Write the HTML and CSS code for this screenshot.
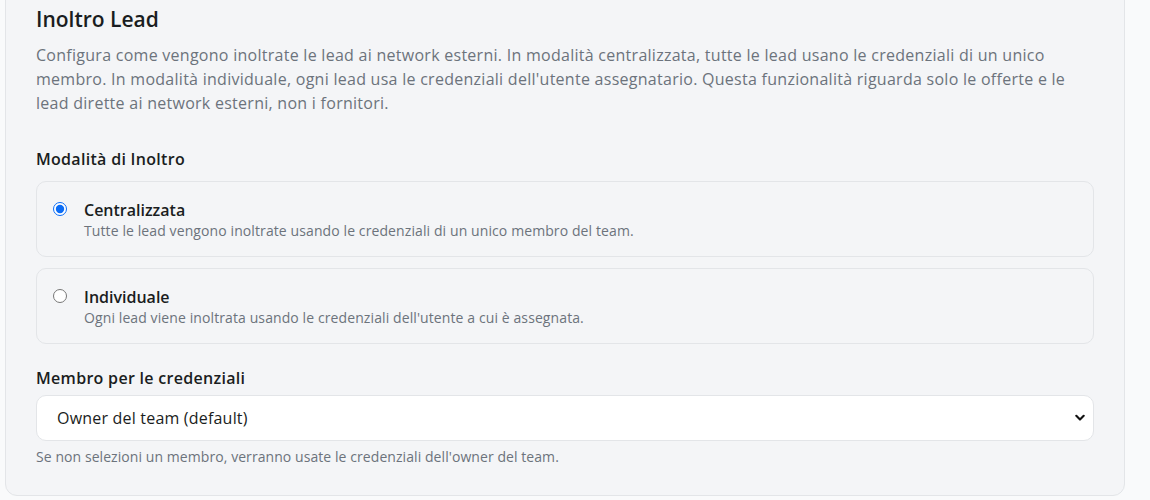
FILE: index.html
```html
<!DOCTYPE html>
<html lang="it">
<head>
<meta charset="utf-8">
<title>Inoltro Lead</title>
<link rel="stylesheet" href="styles.css">
</head>
<body>
<div class="page">
  <section class="card">
    <h2 class="card-title">Inoltro Lead</h2>
    <p class="card-desc">Configura come vengono inoltrate le lead ai network esterni. In modalità centralizzata, tutte le lead usano le credenziali di un unico membro. In modalità individuale, ogni lead usa le credenziali dell'utente assegnatario. Questa funzionalità riguarda solo le offerte e le lead dirette ai network esterni, non i fornitori.</p>

    <div class="field">
      <div class="field-label">Modalità di Inoltro</div>
      <div class="options">
        <label class="option">
          <input type="radio" name="mode" class="option-radio" checked>
          <span class="option-body">
            <span class="option-title">Centralizzata</span>
            <span class="option-desc">Tutte le lead vengono inoltrate usando le credenziali di un unico membro del team.</span>
          </span>
        </label>
        <label class="option">
          <input type="radio" name="mode" class="option-radio">
          <span class="option-body">
            <span class="option-title">Individuale</span>
            <span class="option-desc">Ogni lead viene inoltrata usando le credenziali dell'utente a cui è assegnata.</span>
          </span>
        </label>
      </div>
    </div>

    <div class="field field-member">
      <div class="field-label">Membro per le credenziali</div>
      <div class="select">
        <span class="select-value">Owner del team (default)</span>
        <svg class="select-caret" width="10" height="8" viewBox="0 0 10 8"><path d="M1.3 1.8 L5 5.6 L8.7 1.8" fill="none" stroke="#111" stroke-width="2.1" stroke-linecap="round" stroke-linejoin="round"/></svg>
      </div>
      <div class="field-help">Se non selezioni un membro, verranno usate le credenziali dell'owner del team.</div>
    </div>
  </section>
</div>
</body>
</html>
```

FILE: styles.css
```css
* { box-sizing: border-box; }
html, body { margin: 0; padding: 0; }
body {
  background: #f9fafb;
  font-family: "Open Sans", "Noto Sans", sans-serif;
  color: #212529;
  overflow: hidden;
  height: 500px;
}
.page {
  padding: 0 25px 0 5px;
}
.card {
  margin-top: -26px;
  background: #f4f5f7;
  border: 1px solid #e3e5e8;
  border-radius: 12px;
  padding: 30px 30px 28px 30px;
}
.card-title {
  margin: 0;
  font-size: 21px;
  line-height: 28px;
  font-weight: 600;
  color: #1a1d21;
}
.card-desc {
  margin: 10px 0 0 0;
  font-size: 16px;
  line-height: 24px;
  color: #6c737c;
  letter-spacing: 0.27px;
}
.field { margin-top: 32px; }
.field-label {
  font-size: 16px;
  line-height: 24px;
  font-weight: 600;
  color: #1a1d21;
  letter-spacing: 0.3px;
}
.options {
  margin-top: 10px;
  display: flex;
  flex-direction: column;
  gap: 11px;
}
.option {
  display: flex;
  align-items: flex-start;
  gap: 17px;
  border: 1px solid #e3e5e8;
  border-radius: 10px;
  padding: 16px;
  background: #f4f5f7;
}
.option-radio {
  margin: 4px 0 0 0;
  width: 14px;
  height: 14px;
  accent-color: #0b6cf5;
  flex: none;
}
.option-body { display: flex; flex-direction: column; }
.option-title {
  font-size: 16px;
  line-height: 24px;
  font-weight: 600;
  color: #1a1d21;
}
.option-desc {
  font-size: 14px;
  line-height: 18px;
  color: #6c737c;
  letter-spacing: 0.1px;
}
.field-member { margin-top: 22px; }
.select {
  margin-top: 5px;
  height: 46px;
  background: #ffffff;
  border: 1px solid #e3e5e8;
  border-radius: 10px;
  display: flex;
  align-items: center;
  justify-content: space-between;
  padding: 0 8px 0 20px;
}
.select-value {
  font-size: 16px;
  color: #1a1d21;
  letter-spacing: 0.2px;
}
.field-help {
  margin-top: 6px;
  font-size: 14px;
  line-height: 20px;
  color: #6c737c;
  letter-spacing: 0.07px;
}
```
